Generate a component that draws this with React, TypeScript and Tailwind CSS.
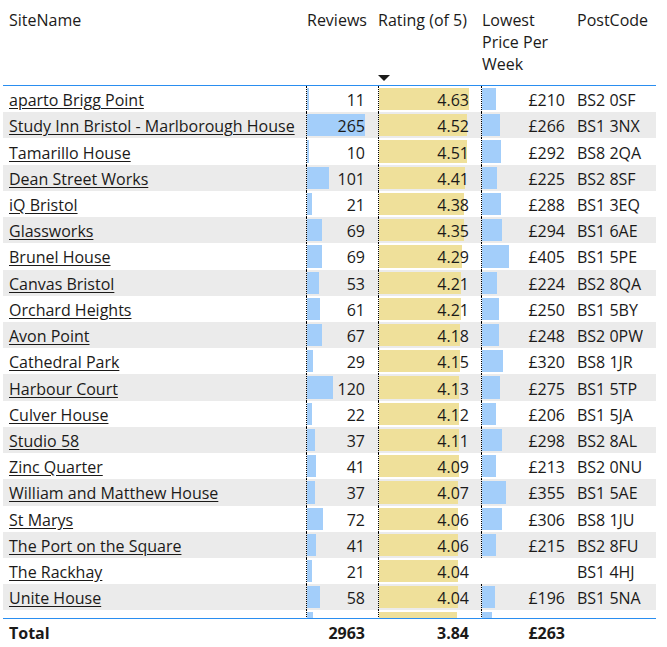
import React from 'react';

type Site = {
  name: string;
  reviews: number;
  rating: number;
  price: number | null;
  postCode: string;
};

const sites: Site[] = [
  { name: 'aparto Brigg Point', reviews: 11, rating: 4.63, price: 210, postCode: 'BS2 0SF' },
  { name: 'Study Inn Bristol - Marlborough House', reviews: 265, rating: 4.52, price: 266, postCode: 'BS1 3NX' },
  { name: 'Tamarillo House', reviews: 10, rating: 4.51, price: 292, postCode: 'BS8 2QA' },
  { name: 'Dean Street Works', reviews: 101, rating: 4.41, price: 225, postCode: 'BS2 8SF' },
  { name: 'iQ Bristol', reviews: 21, rating: 4.38, price: 288, postCode: 'BS1 3EQ' },
  { name: 'Glassworks', reviews: 69, rating: 4.35, price: 294, postCode: 'BS1 6AE' },
  { name: 'Brunel House', reviews: 69, rating: 4.29, price: 405, postCode: 'BS1 5PE' },
  { name: 'Canvas Bristol', reviews: 53, rating: 4.21, price: 224, postCode: 'BS2 8QA' },
  { name: 'Orchard Heights', reviews: 61, rating: 4.21, price: 250, postCode: 'BS1 5BY' },
  { name: 'Avon Point', reviews: 67, rating: 4.18, price: 248, postCode: 'BS2 0PW' },
  { name: 'Cathedral Park', reviews: 29, rating: 4.15, price: 320, postCode: 'BS8 1JR' },
  { name: 'Harbour Court', reviews: 120, rating: 4.13, price: 275, postCode: 'BS1 5TP' },
  { name: 'Culver House', reviews: 22, rating: 4.12, price: 206, postCode: 'BS1 5JA' },
  { name: 'Studio 58', reviews: 37, rating: 4.11, price: 298, postCode: 'BS2 8AL' },
  { name: 'Zinc Quarter', reviews: 41, rating: 4.09, price: 213, postCode: 'BS2 0NU' },
  { name: 'William and Matthew House', reviews: 37, rating: 4.07, price: 355, postCode: 'BS1 5AE' },
  { name: 'St Marys', reviews: 72, rating: 4.06, price: 306, postCode: 'BS8 1JU' },
  { name: 'The Port on the Square', reviews: 41, rating: 4.06, price: 215, postCode: 'BS2 8FU' },
  { name: 'The Rackhay', reviews: 21, rating: 4.04, price: null, postCode: 'BS1 4HJ' },
  { name: 'Unite House', reviews: 58, rating: 4.04, price: 196, postCode: 'BS1 5NA' },
  { name: 'Urbanest Bristol Halls', reviews: 27, rating: 4.03, price: 150, postCode: 'BS1 6DF' }
];

// bar scales, matched to the widest bar in each column
const reviewsBar = (v: number) => (v / 265) * 58;
const ratingBar = (v: number) => (v / 4.63) * 90;
const priceBar = (v: number) => (v / 405) * 27;

const cols = 'grid-cols-[303px_72px_103px_96px_79px]';

function BarCell({ bar, color, text, box }: { bar: number; color: string; text: string; box: string }) {
  return (
    <div className={`relative h-full border-l border-dotted border-black ${box}`}>
      <div className={`absolute left-0 top-[2px] bottom-[2px] ${color}`} style={{ width: `${bar}px` }} />
      <div className="relative flex h-full items-center justify-end pr-[1px] pt-[2px]">{text}</div>
    </div>
  );
}

export default function App() {
  return (
    <div
      className="h-[647px] w-[667px] overflow-hidden bg-white text-[16px] text-[#1b1a19]"
      style={{ fontFamily: '"Open Sans", "Noto Sans", sans-serif' }}
    >
      <div className="ml-[3px] w-[653px]">
        {/* header */}
        <div className={`grid h-[86px] ${cols} border-b border-[#2a8ef0] leading-[22px]`}>
          <div className="pl-[6px] pt-[9px]">SiteName</div>
          <div className="pl-[1px] pt-[9px]">Reviews</div>
          <div className="relative pt-[9px]">
            Rating (of 5)
            <svg className="absolute left-0 top-[75px]" width="12" height="6" viewBox="0 0 12 6">
              <path d="M0 0 L12 0 L6 6 Z" fill="#1b1a19" />
            </svg>
          </div>
          <div className="pl-[1px] pt-[9px]">
            Lowest
            <br />
            Price Per
            <br />
            Week
          </div>
          <div className="pt-[9px]">PostCode</div>
        </div>

        {/* body, clipped like a scrolled visual */}
        <div className="h-[532px] overflow-hidden">
          {sites.map((s, i) => (
            <div key={s.name} className={`grid h-[26.23px] ${cols} ${i % 2 === 1 ? 'bg-[#ebebeb]' : 'bg-white'}`}>
              <div className="flex items-center pl-[6px] pt-[2px]">
                <span className="underline underline-offset-[2px]">{s.name}</span>
              </div>
              <div className="pr-[12px]">
                <BarCell bar={reviewsBar(s.reviews)} color="bg-[#a3cefa]" text={String(s.reviews)} box="w-[60px]" />
              </div>
              <div className="pr-[11px]">
                <BarCell bar={ratingBar(s.rating)} color="bg-[#efe09a]" text={s.rating.toFixed(2)} box="w-[92px]" />
              </div>
              <div className="pr-[11px]">
                {s.price !== null && (
                  <BarCell bar={priceBar(s.price)} color="bg-[#a3cefa]" text={`£${s.price}`} box="w-[85px]" />
                )}
              </div>
              <div className="flex items-center pt-[2px]">{s.postCode}</div>
            </div>
          ))}
        </div>

        {/* total */}
        <div className={`grid h-[29px] ${cols} border-t border-[#2a8ef0] font-bold`}>
          <div className="flex items-center pl-[6px]">Total</div>
          <div className="flex items-center justify-end pr-[13px]">2963</div>
          <div className="flex items-center justify-end pr-[12px]">3.84</div>
          <div className="flex items-center justify-end pr-[12px]">£263</div>
          <div />
        </div>
      </div>
    </div>
  );
}
